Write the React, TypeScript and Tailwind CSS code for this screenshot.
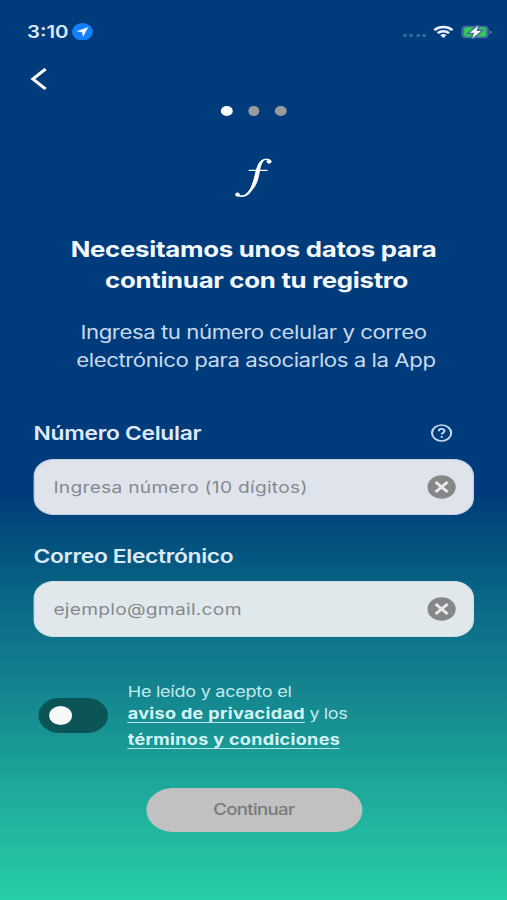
import { clsx } from "clsx";

const steps = [true, false, false];

function StatusBar() {
  return (
    <header className="flex h-[63px] items-center justify-between pr-[11.5px] pl-[22.5px]">
      <div className="flex items-center gap-[3px]">
        <span className="mt-0.5 text-[17px] leading-none font-semibold text-[#dbe7f8]">3:10</span>
        <svg className="size-[17.5px]" viewBox="0 0 18 18">
          <circle cx="9" cy="9" r="9" fill="#1580fb" />
          <path d="M14 4 3.8 8.5l4.8 1.1.9 4.9Z" fill="#eaf4ff" />
        </svg>
      </div>
      <div className="flex items-center">
        <div className="mt-2 mr-[6px] flex gap-[2.4px]">
          {[0, 1, 2, 3].map((i) => (
            <span key={i} className="size-[3px] rounded-full bg-[#3f6fa2]" />
          ))}
        </div>
        <svg className="mr-[6px] h-[14px] w-[17px]" viewBox="0 0 18 14" fill="none" stroke="#e6f0ff" strokeWidth="2.6">
          <path d="M1 5a11.400 11.400 0 0 1 16 0" />
          <path d="M4 8.300a7.100 7.100 0 0 1 10 0" />
          <path d="M6.200 10.400a3.700 3.700 0 0 1 5.600 0L9 13.400Z" fill="#e6f0ff" stroke="none" />
        </svg>
        <svg className="h-[14px] w-[27px]" viewBox="0 0 28 15">
          <rect x="0" y=".8" width="24.5" height="13.4" rx="4" fill="#3e70a0" />
          <path d="M25.5 5.5c1.900.5 1.900 3.500 0 4Z" fill="#5f8cb8" />
          <rect x="2.500" y="2.800" width="19.500" height="9.400" rx="2.400" fill="#35cf4f" />
          <path d="M15.200.8 7.500 8.400h4l-1.700 5.800 7.700-7.800h-4Z" fill="#fff" stroke="#3e70a0" strokeWidth="3" paintOrder="stroke" />
        </svg>
      </div>
    </header>
  );
}

function ClearIcon() {
  return (
    <svg className="size-6" viewBox="0 0 24 24">
      <circle cx="12" cy="12" r="11.8" fill="#858789" />
      <path d="m7 7 10 10m0-10-10 10" stroke="#e6e9ec" strokeWidth="2.5" />
    </svg>
  );
}

function Field({ placeholder, className }: { placeholder: string; className: string }) {
  return (
    <div className={clsx("flex h-14 items-center justify-between rounded-[17px] border pr-[14px] pl-4", className)}>
      <span className="pt-px text-[16px] tracking-[0.22px] text-[#85898f]">{placeholder}</span>
      <ClearIcon />
    </div>
  );
}

export default function App() {
  return (
    <div className="h-[900px] w-[507px] overflow-hidden bg-[linear-gradient(180deg,#003c7b_0px,#003c7b_495px,#04527f_545px,#0b6b87_610px,#148690_695px,#1ea99a_790px,#28cfa6_900px)]">
      {/* the whole screen is drawn 20% wider than its natural proportions */}
      <main className="flex h-full w-[422.5px] origin-left scale-x-[1.2] flex-col font-['Inter','Liberation_Sans',sans-serif]">
        <StatusBar />

        <div className="flex h-[32px] items-center pl-[25px]">
          <svg className="h-[24px] w-[15px]" viewBox="0 0 15 24" fill="none" stroke="#fff" strokeWidth="2.8">
            <path d="M13 2 2.400 12 13 22" />
          </svg>
        </div>

        <div className="mt-[11px] flex justify-center gap-[13px]">
          {steps.map((active, i) => (
            <span key={i} className={clsx("size-[9.5px] rounded-full", active ? "bg-white" : "bg-[#999b9c]")} />
          ))}
        </div>

        <svg className="mt-[41px] ml-[194.5px] h-[44px] w-[34px]" viewBox="0 0 34 44" fill="none" stroke="#fff" strokeLinecap="round">
          <path d="M29.800 3.300C25 .2 21.500 4.500 19.800 12L16.200 27c-2.200 9-6.400 14.200-13.400 11.400" strokeWidth="1.600" />
          <path d="M21.800 4.800C18.500 10 18.300 16 16.600 23c-1.600 6.500-3.200 11-7 14.600 5.400-3.300 8.200-8 10-14.600 1.800-6.500 1.200-12.500 4.600-19.200Z" fill="#fff" strokeWidth="0.8" />
          <path d="M12.800 13.400h14.600" strokeWidth="1.400" />
          <circle cx="29.200" cy="4.600" r="1.700" fill="#fff" strokeWidth="0.8" />
          <circle cx="2.900" cy="37.500" r="1.600" fill="#fff" strokeWidth="0.8" />
        </svg>

        <h1 className="mt-[33.5px] text-center text-[21.5px] leading-[31px] font-bold tracking-[-0.24px] text-[#f4f8ff]">
          Necesitamos unos datos para
          <br />
          <span className="pl-[5px]">continuar con tu registro</span>
        </h1>

        <p className="mt-[22px] text-center text-[18.5px] leading-[28px] tracking-[-0.37px] text-[#c9d9ee]">
          Ingresa tu número celular y correo
          <br />
          <span className="pl-[4px]">electrónico para asociarlos a la App</span>
        </p>

        <section className="mt-[46.5px] px-[27.5px]">
          <div className="flex h-[24px] items-center justify-between pr-[18px]">
            <h2 className="pt-[2px] pl-[0.5px] text-[19px] leading-6 font-semibold tracking-[-0.25px] text-[#dfe9fa]">Número Celular</h2>
            <svg className="size-[18px]" viewBox="0 0 18 18" fill="none" stroke="#c9daf2" strokeWidth="1.7">
              <circle cx="9" cy="9" r="8" />
              <path d="M6.700 7.200c0-3 4.700-3 4.700-.2 0 1.800-2.300 1.700-2.300 3.600" />
              <path d="M9.100 12v1.700" />
            </svg>
          </div>
          <div className="mt-[14px]">
            <Field placeholder="Ingresa número (10 dígitos)" className="border-[#c5d1de] bg-[#dfe4ec]" />
          </div>
          <h2 className="mt-[30px] pl-[0.5px] text-[19px] leading-6 font-semibold tracking-[-0.28px] text-[#dbeaf8]">Correo Electrónico</h2>
          <div className="mt-[12px]">
            <Field placeholder="ejemplo@gmail.com" className="border-[#d2e0e4] bg-[#e0e8eb]" />
          </div>
        </section>

        <section className="mt-[42px] flex pl-[32.3px]">
          <div className="mt-[19px] flex h-[35px] w-[58.2px] items-center rounded-full bg-[#0c5557] pl-[9px]">
            <span className="size-[19px] rounded-full bg-[#f7f8f8]" />
          </div>
          <div className="ml-4 text-[15px] whitespace-nowrap text-[#c5eaec]">
            <p className="leading-[26px] tracking-[-0.2px]">He leído y acepto el</p>
            <p className="h-[22px] leading-[18px] tracking-[-0.35px]">
              <span className="inline-block h-[18px] border-b-[1.5px] border-[#b5e5e5] font-bold tracking-[0.27px] text-[#d6f4f5]">aviso de privacidad</span> y los
            </p>
            <p className="mt-[4px] leading-[18px]">
              <span className="inline-block h-[18px] border-b-[1.5px] border-[#b5e5e5] font-bold tracking-[0.27px] text-[#d6f4f5]">términos y condiciones</span>
            </p>
          </div>
        </section>

        <button className="mt-[39px] ml-[121.5px] h-[44px] w-[180px] rounded-full bg-[#c1c1c1] text-[15.5px] font-medium tracking-[-0.55px] text-[#777a7a]">
          Continuar
        </button>
      </main>
    </div>
  );
}
